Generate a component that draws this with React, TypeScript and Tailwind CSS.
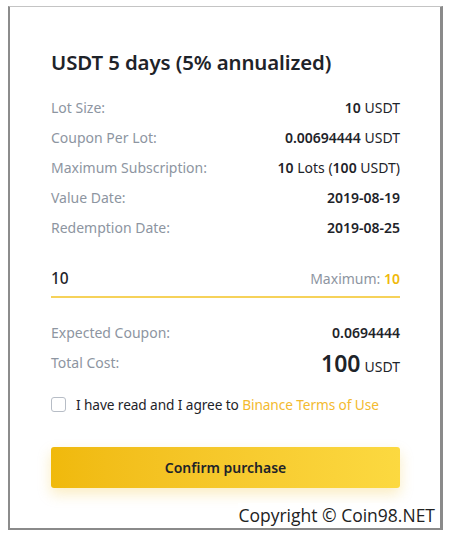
import React, { useState } from 'react';

// 行データ
const infoRows = [
  { label: 'Lot Size:', strong: '10', rest: ' USDT' },
  { label: 'Coupon Per Lot:', strong: '0.00694444', rest: ' USDT' },
  { label: 'Maximum Subscription:', strong: '10', rest: ' Lots (', strong2: '100', rest2: ' USDT)' },
  { label: 'Value Date:', strong: '2019-08-19', rest: '' },
  { label: 'Redemption Date:', strong: '2019-08-25', rest: '' },
];

const font = { fontFamily: '"Noto Sans", "Liberation Sans", sans-serif' };

const App: React.FC = () => {
  const [amount, setAmount] = useState<string>('10');
  const [agreed, setAgreed] = useState<boolean>(false);

  return (
    <div className="relative w-[451px] h-[540px] bg-white font-['Noto_Sans',sans-serif]">
      <div className="ml-[8px] pt-[6px]">
        <div className="w-[435px] h-[524px] bg-white border-l-2 border-t border-r-[3px] border-b-2 border-l-[#8c8c8c] border-t-[#c4c4c4] border-r-[#8a8a8a] border-b-[#8a8a8a] pl-[41px] pr-[40px] pt-[41px]">
          <h1 className="text-[20.4px] leading-[28px] font-semibold text-[#1e2329] tracking-[-0.1px]">
            USDT 5 days (5% annualized)
          </h1>

          <div className="mt-[17px]">
            {infoRows.map((row) => (
              <div key={row.label} className="flex h-[29.8px] items-center justify-between text-[14px]">
                <span className="text-[#8d95a1]">{row.label}</span>
                <span className="text-[#1e2329]">
                  <span className="font-semibold">{row.strong}</span>
                  {row.rest}
                  {row.strong2 && <span className="font-semibold">{row.strong2}</span>}
                  {row.rest2}
                </span>
              </div>
            ))}
          </div>

          {/* 数量入力 */}
          <div className="mt-[20px] flex h-[36px] items-center justify-between border-b-2 border-[#f6d25a]">
            <input
              value={amount}
              onChange={(e) => setAmount(e.target.value)}
              className="w-[120px] text-[15.5px] font-medium text-[#1e2329] outline-none bg-transparent"
              style={font}
            />
            <span className="text-[14px] text-[#8d95a1]">
              Maximum: <span className="font-semibold text-[#f0b90b]">10</span>
            </span>
          </div>

          <div className="mt-[20px]">
            <div className="flex h-[30px] items-center justify-between text-[14px]">
              <span className="text-[#8d95a1]">Expected Coupon:</span>
              <span className="font-semibold text-[#1e2329]">0.0694444</span>
            </div>
            <div className="flex h-[30px] items-center justify-between">
              <span className="text-[14px] text-[#8d95a1]">Total Cost:</span>
              <span className="flex items-baseline text-[#1e2329]">
                <span className="text-[23px] font-semibold">100</span>
                <span className="ml-[4px] text-[14px]">USDT</span>
              </span>
            </div>
          </div>

          {/* 同意チェック */}
          <label className="mt-[15px] flex h-[24px] items-center text-[13.7px] text-[#1e2329]">
            <input
              type="checkbox"
              checked={agreed}
              onChange={() => setAgreed(!agreed)}
              className="appearance-none w-[15px] h-[15px] rounded-[3px] border border-[#b7bdc6] bg-white"
            />
            <span className="ml-[10px] tracking-[-0.1px]">
              I have read and I agree to <span className="text-[#f3ba2f]">Binance Terms of Use</span>
            </span>
          </label>

          <button className="mt-[30px] w-full h-[41px] rounded-[3px] bg-gradient-to-r from-[#f0b90b] to-[#fcd940] text-[14px] font-semibold text-[#1e2329] shadow-[0_6px_14px_rgba(240,185,11,0.25)]">
            Confirm purchase
          </button>
        </div>
      </div>

      {/* 透かし */}
      <div className="absolute right-[16px] top-[503px] text-[17.5px] leading-[24px] text-[#222] bg-white/70" style={{ fontFamily: '"Open Sans", sans-serif' }}>
        Copyright © Coin98.NET
      </div>
    </div>
  );
};

export default App;
